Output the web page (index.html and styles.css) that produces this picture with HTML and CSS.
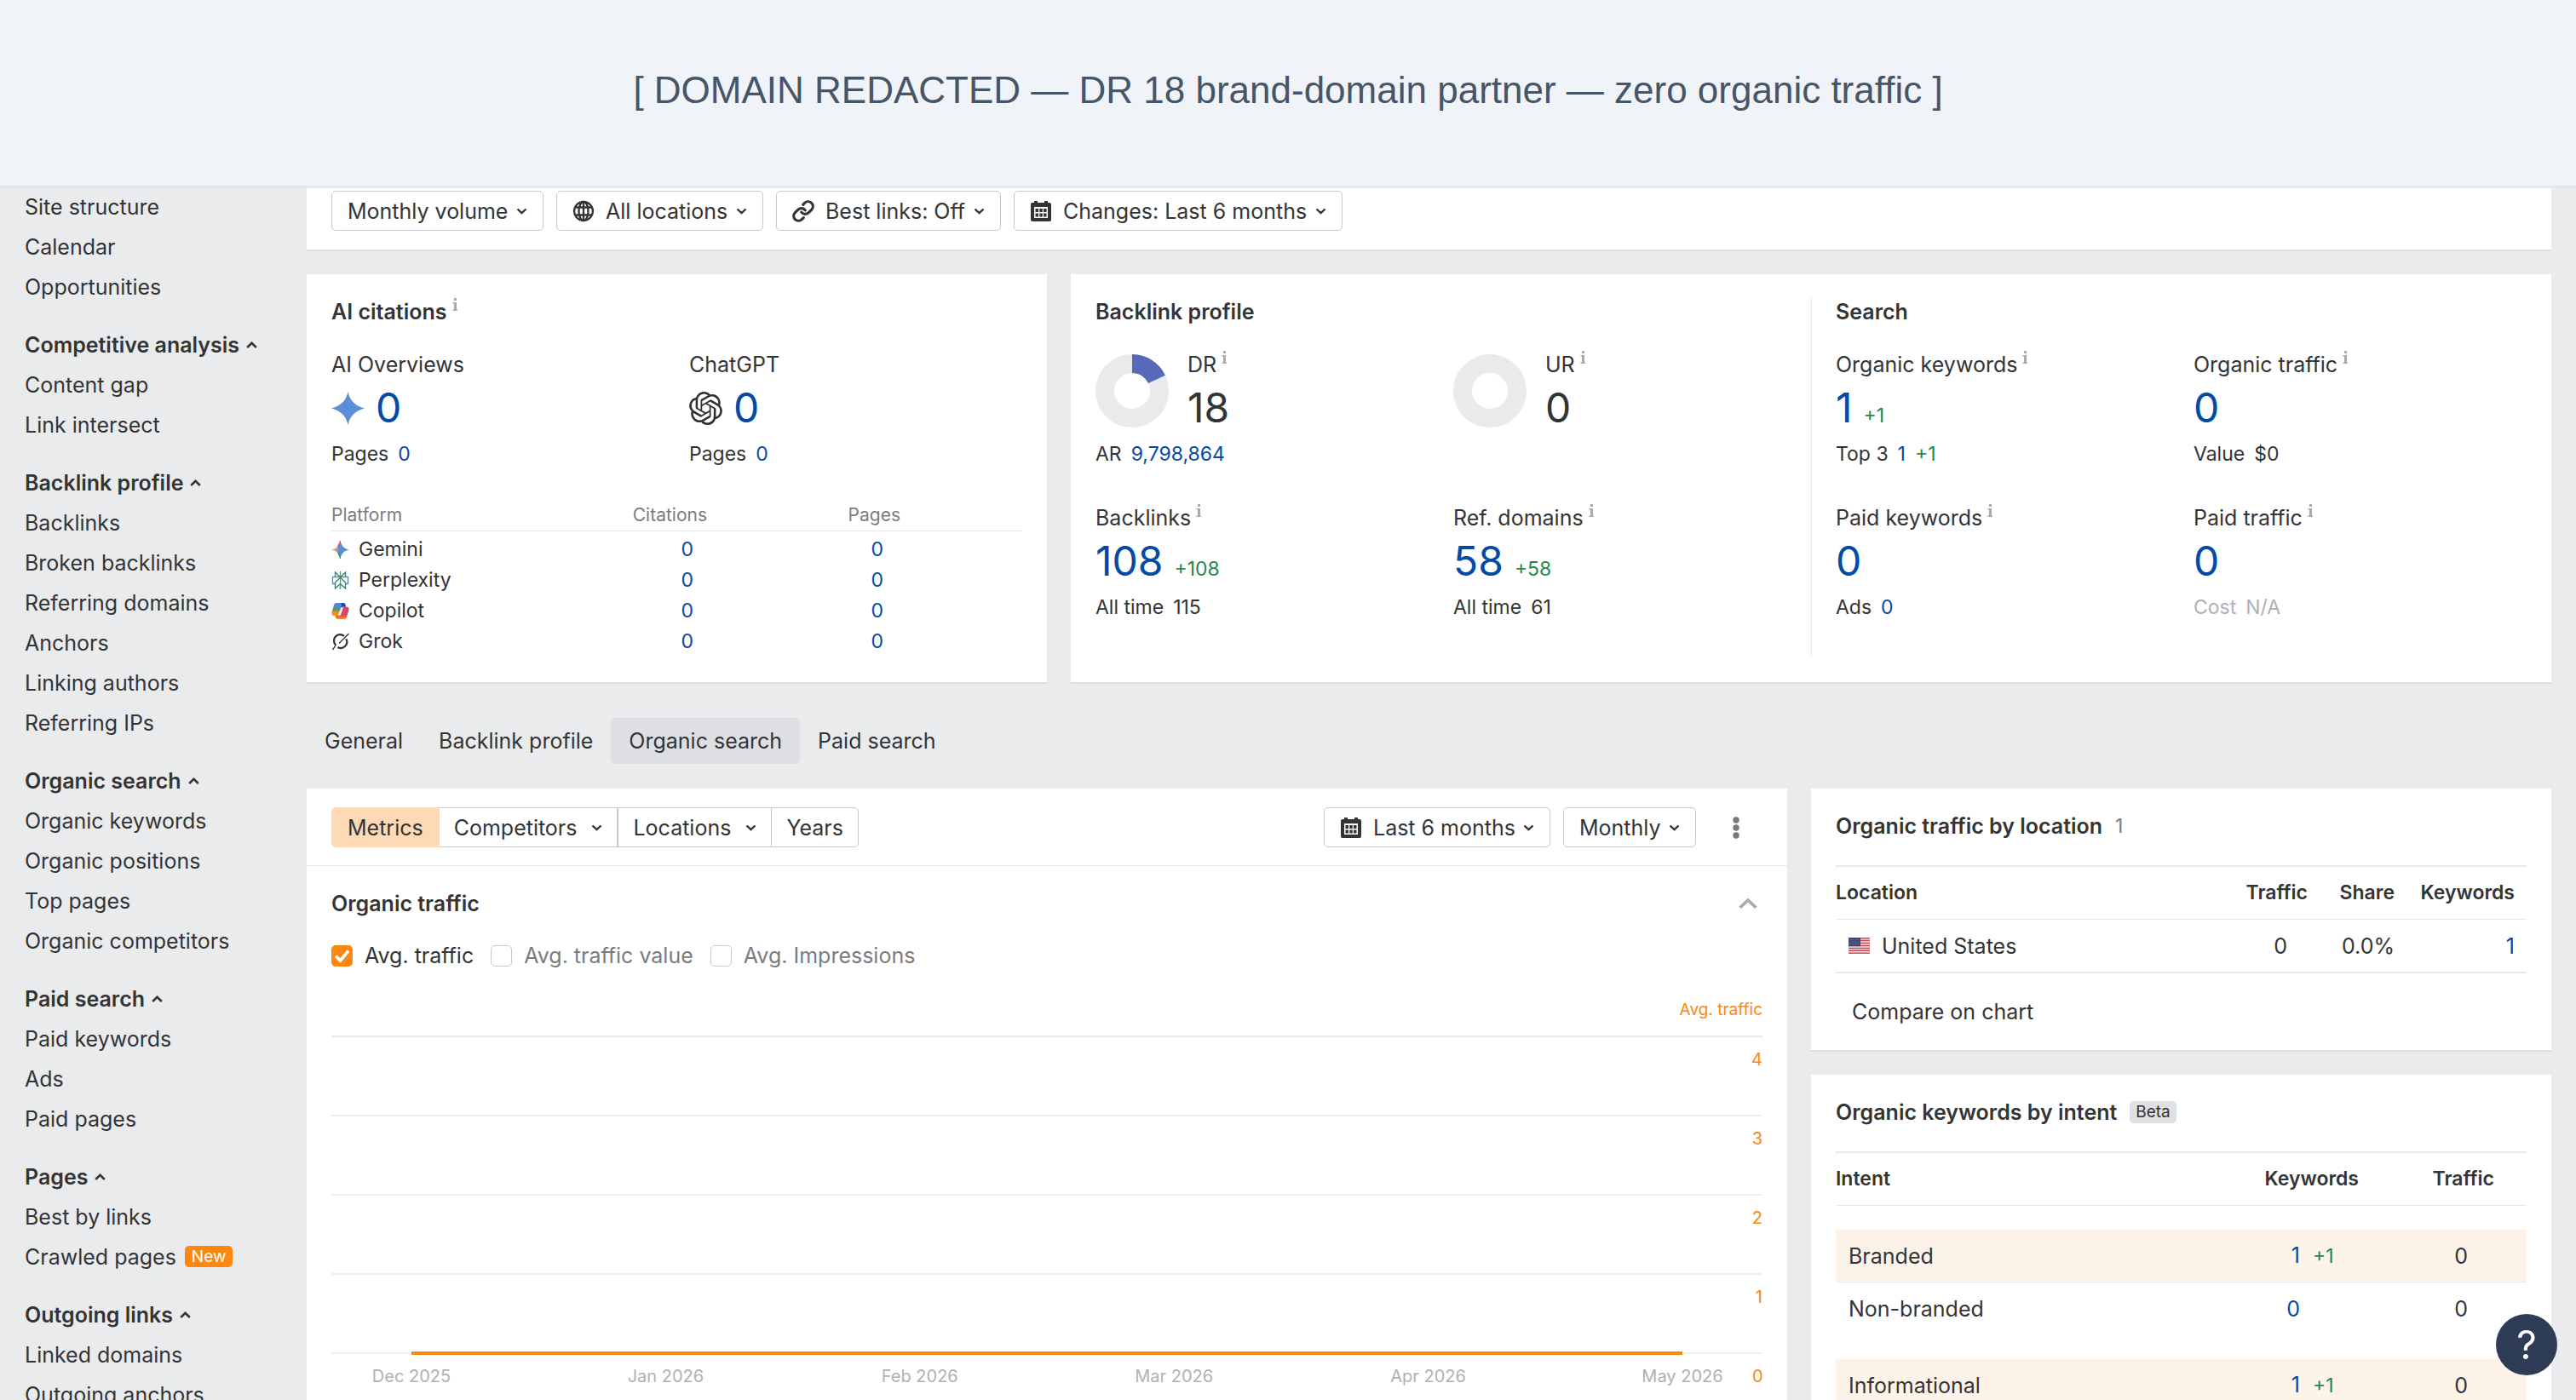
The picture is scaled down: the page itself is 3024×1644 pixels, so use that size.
FILE: index.html
```html
<!DOCTYPE html>
<html lang="en">
<head>
<meta charset="utf-8">
<title>Site Explorer – Overview</title>
<meta name="viewport" content="width=device-width, initial-scale=1">
<link rel="stylesheet" href="styles.css">
</head>
<body>
<svg class="sprite" aria-hidden="true">
  <symbol id="down" viewBox="0 0 13 8"><path d="M1.5 1.5 6.5 6.2 11.5 1.5" fill="none" stroke="currentColor" stroke-width="2.4"/></symbol>
  <symbol id="up" viewBox="0 0 13 8"><path d="M1.2 7 6.5 1.8 11.8 7" fill="none" stroke="currentColor" stroke-width="2.6"/></symbol>
  <symbol id="info" viewBox="0 0 6 15"><path d="M2 0h3v3H2zM0.500 5H5v8.500h1V15H0.500v-1.500H2V6.500H0.500z" fill="currentColor"/></symbol>
  <symbol id="calendar" viewBox="0 0 26 26"><path fill="currentColor" fill-rule="evenodd" d="M5 1h4v2h8V1h4v2h2a2 2 0 0 1 2 2v18a2 2 0 0 1-2 2H3a2 2 0 0 1-2-2V5a2 2 0 0 1 2-2h2zM5 8v13h16V8zM6.500 10H10v4H6.500zM11.300 10h3.500v4h-3.500zM16 10h3.500v4H16zM6.500 15.500H10v4H6.500zM11.300 15.500h3.500v4h-3.500zM16 15.500h3.500v4H16z"/></symbol>
</svg>

<header class="banner">[ DOMAIN REDACTED — DR 18 brand-domain partner — zero organic traffic ]</header>

<div class="shell">
  <nav class="sidebar" aria-label="Reports">
    <ul>
      <li><a href="#">Site structure</a></li>
      <li><a href="#">Calendar</a></li>
      <li><a href="#">Opportunities</a></li>
    </ul>
    <button type="button" aria-expanded="true">Competitive analysis <svg class="chev"><use href="#up"/></svg></button>
    <ul>
      <li><a href="#">Content gap</a></li>
      <li><a href="#">Link intersect</a></li>
    </ul>
    <button type="button" aria-expanded="true">Backlink profile <svg class="chev"><use href="#up"/></svg></button>
    <ul>
      <li><a href="#">Backlinks</a></li>
      <li><a href="#">Broken backlinks</a></li>
      <li><a href="#">Referring domains</a></li>
      <li><a href="#">Anchors</a></li>
      <li><a href="#">Linking authors</a></li>
      <li><a href="#">Referring IPs</a></li>
    </ul>
    <button type="button" aria-expanded="true">Organic search <svg class="chev"><use href="#up"/></svg></button>
    <ul>
      <li><a href="#">Organic keywords</a></li>
      <li><a href="#">Organic positions</a></li>
      <li><a href="#">Top pages</a></li>
      <li><a href="#">Organic competitors</a></li>
    </ul>
    <button type="button" aria-expanded="true">Paid search <svg class="chev"><use href="#up"/></svg></button>
    <ul>
      <li><a href="#">Paid keywords</a></li>
      <li><a href="#">Ads</a></li>
      <li><a href="#">Paid pages</a></li>
    </ul>
    <button type="button" aria-expanded="true">Pages <svg class="chev"><use href="#up"/></svg></button>
    <ul>
      <li><a href="#">Best by links</a></li>
      <li><a href="#">Crawled pages <span class="badge badge-new">New</span></a></li>
    </ul>
    <button type="button" aria-expanded="true">Outgoing links <svg class="chev"><use href="#up"/></svg></button>
    <ul>
      <li><a href="#">Linked domains</a></li>
      <li><a href="#">Outgoing anchors</a></li>
    </ul>
  </nav>

  <main class="main">
    <section class="card filters" aria-label="Filters">
      <label class="picker"><select aria-label="Volume"><option>Monthly volume</option></select><svg class="chev"><use href="#down"/></svg></label>
      <label class="picker">
        <svg class="icon" viewBox="0 0 26 26"><g fill="none" stroke="currentColor" stroke-width="2.300"><circle cx="13" cy="13" r="11"/><ellipse cx="13" cy="13" rx="5.500" ry="11"/><path d="M13 2v22M3.200 8.500h19.600M3.200 17.500h19.600"/></g></svg>
        <select aria-label="Location"><option>All locations</option></select><svg class="chev"><use href="#down"/></svg></label>
      <label class="picker">
        <svg class="icon" viewBox="0.500 0.500 23 23"><g fill="none" stroke="currentColor" stroke-width="2.800" stroke-linecap="round"><path d="M10 13a5 5 0 0 0 7.540.540l3-3a5 5 0 0 0-7.070-7.070l-1.720 1.710"/><path d="M14 11a5 5 0 0 0-7.540-.540l-3 3a5 5 0 0 0 7.070 7.070l1.710-1.710"/></g></svg>
        <select aria-label="Best links"><option>Best links: Off</option></select><svg class="chev"><use href="#down"/></svg></label>
      <label class="picker">
        <svg class="icon"><use href="#calendar"/></svg>
        <select aria-label="Changes"><option>Changes: Last 6 months</option></select><svg class="chev"><use href="#down"/></svg></label>
    </section>

    <div class="summary">
      <section class="card panel">
        <h2>AI citations <svg class="info"><use href="#info"/></svg></h2>
        <div class="metrics">
          <div class="metric">
            <h3>AI Overviews</h3>
            <p class="value"><svg class="logo" viewBox="0 0 39 39"><path d="M19.500 0C21.500 10 28 17 39 19.500 28 22 21.500 29 19.500 39 17.500 29 11 22 0 19.500 11 17 17.500 10 19.500 0z" fill="#5b8ed8"/></svg><a href="#">0</a></p>
            <p class="sub">Pages <a href="#">0</a></p>
          </div>
          <div class="metric">
            <h3>ChatGPT</h3>
            <p class="value"><svg class="logo" viewBox="0 0 24 24"><path fill="#303134" d="M22.2819 9.8211a5.9847 5.9847 0 0 0-.5157-4.9108 6.0462 6.0462 0 0 0-6.5098-2.9A6.0651 6.0651 0 0 0 4.9807 4.1818a5.9847 5.9847 0 0 0-3.9977 2.9 6.0462 6.0462 0 0 0 .7427 7.0966 5.98 5.98 0 0 0 .511 4.9107 6.051 6.051 0 0 0 6.5146 2.9001A5.9847 5.9847 0 0 0 13.2599 24a6.0557 6.0557 0 0 0 5.7718-4.2058 5.9894 5.9894 0 0 0 3.9977-2.9001 6.0557 6.0557 0 0 0-.7475-7.0729zm-9.022 12.6081a4.4755 4.4755 0 0 1-2.8764-1.0408l.1419-.0804 4.7783-2.7582a.7948.7948 0 0 0 .3927-.6813v-6.7369l2.02 1.1686a.071.071 0 0 1 .038.0615v5.5826a4.504 4.504 0 0 1-4.4945 4.4849zm-9.6607-4.1254a4.4708 4.4708 0 0 1-.5346-3.0137l.142.0852 4.783 2.7582a.7712.7712 0 0 0 .7806 0l5.8428-3.3685v2.3324a.0804.0804 0 0 1-.0332.0615L9.74 19.9502a4.4992 4.4992 0 0 1-6.1408-1.6464zM2.3408 7.8956a4.485 4.485 0 0 1 2.3655-1.9728V11.6a.7664.7664 0 0 0 .3879.6765l5.8144 3.3543-2.0201 1.1685a.0757.0757 0 0 1-.071 0l-4.8303-2.7865A4.504 4.504 0 0 1 2.3408 7.872zm16.5963 3.8558L13.1038 8.364 15.1192 7.2a.0757.0757 0 0 1 .071 0l4.8303 2.7913a4.4944 4.4944 0 0 1-.6765 8.1042v-5.6772a.79.79 0 0 0-.407-.667zm2.0107-3.0231l-.142-.0852-4.7735-2.7818a.7759.7759 0 0 0-.7854 0L9.409 9.2297V6.8974a.0662.0662 0 0 1 .0284-.0615l4.8303-2.7866a4.4992 4.4992 0 0 1 6.6802 4.66zM8.3065 12.863l-2.02-1.1638a.0804.0804 0 0 1-.038-.0567V6.0742a4.4992 4.4992 0 0 1 7.3757-3.4537l-.142.0805L8.704 5.459a.7948.7948 0 0 0-.3927.6813zm1.0976-2.3654l2.602-1.4998 2.6069 1.4998v2.9994l-2.5974 1.4997-2.6067-1.4997Z"/></svg><a href="#">0</a></p>
            <p class="sub">Pages <a href="#">0</a></p>
          </div>
        </div>
        <table class="platforms">
          <thead><tr><th scope="col">Platform</th><th scope="col">Citations</th><th scope="col">Pages</th><th class="rest"></th></tr></thead>
          <tbody>
            <tr><th scope="row"><span class="with-icon"><svg class="mark" viewBox="0 0 21 21"><defs><linearGradient id="gem" x1="0" x2="1"><stop offset="0" stop-color="#f59a2c"/><stop offset=".3" stop-color="#c79a94"/><stop offset=".42" stop-color="#5b8ed8"/></linearGradient></defs><path d="M10.500 0C11.500 5.500 15 9.500 21 10.500 15 11.500 11.500 15.500 10.500 21 9.500 15.500 6 11.500 0 10.500 6 9.500 9.500 5.500 10.500 0z" fill="url(#gem)"/><path d="M10.500 0c-.6 3-1.600 5-3 6.800" stroke="#cf4b5f" stroke-width="1.200" fill="none"/><path d="M10.500 21c-.6-3-1.600-5-3-6.800" stroke="#2e9160" stroke-width="1.200" fill="none"/></svg>Gemini</span></th><td><a href="#">0</a></td><td><a href="#">0</a></td><td></td></tr>
            <tr><th scope="row"><span class="with-icon"><svg class="mark" viewBox="0 0 21 21"><g fill="none" stroke-width="1.400"><path stroke="#5c8fb4" d="M10.500 0v21M4.500 14.500h-3v-8h18v8h-3"/><path stroke="#2f8f68" d="M10.500 7 4.500 1v5.500M10.500 7l6-6v5.500M10.500 7l-6 6v7l6-5.500M10.500 7l6 6v7l-6-5.500"/></g></svg>Perplexity</span></th><td><a href="#">0</a></td><td><a href="#">0</a></td><td></td></tr>
            <tr><th scope="row"><span class="with-icon"><svg class="mark" viewBox="0 0 21 21"><defs><linearGradient id="cpl" x1="0" x2="0" y1="0" y2="1"><stop offset=".2" stop-color="#5189dc"/><stop offset=".5" stop-color="#4a9a78"/><stop offset=".75" stop-color="#fb8c1e"/></linearGradient><linearGradient id="cpr" x1="0" x2="0" y1="0" y2="1"><stop offset=".3" stop-color="#d0466a"/><stop offset=".65" stop-color="#d84a52"/><stop offset="1" stop-color="#fb8c1e"/></linearGradient></defs><path d="M6 1h8c1.500 0 2 .8 2.400 2l.6 2.500h-3.500c-1.500 0-2.200.7-2.600 2L8.500 14c-.4 1.400-1 2-2.500 2H3.500C.8 16 0 14.200.6 11.500L3 3.500C3.500 1.800 4.300 1 6 1z" fill="url(#cpl)"/><path d="M12 1h2c1.500 0 2 .8 2.400 2l.6 2.500h-3.500c-1 0-1.700.3-2.100 1z" fill="#1648b0"/><path d="M15 20H7.500c-1.500 0-2-.8-2.400-2l-.6-2H7c1.500 0 2.200-.7 2.600-2L12 7.500c.4-1.400 1-2 2.500-2h3c2.700 0 3.500 1.800 2.900 4.500L18 17.500C17.500 19.200 16.700 20 15 20z" fill="url(#cpr)"/><path d="M12.500 6.500h1.300l-3 9H8.600z" fill="#fff"/></svg>Copilot</span></th><td><a href="#">0</a></td><td><a href="#">0</a></td><td></td></tr>
            <tr><th scope="row"><span class="with-icon"><svg class="mark" viewBox="0 0 21 21"><g fill="none" stroke="#303134"><path stroke-width="2.200" d="M15 4A7.200 7.200 0 0 0 5.400 14.800M7.500 17A7.200 7.200 0 0 0 17.300 7.200"/><path stroke-width="1.300" d="M9 12.500 20.500 1M5 14.500C4 16.500 2.500 18.500 1.500 20"/></g></svg>Grok</span></th><td><a href="#">0</a></td><td><a href="#">0</a></td><td></td></tr>
          </tbody>
        </table>
      </section>

      <div class="card pair">
        <section class="panel">
          <h2>Backlink profile</h2>
          <div class="metrics">
            <div class="metric gauge">
              <svg class="donut" viewBox="0 0 86 86"><circle cx="43" cy="43" r="32" fill="none" stroke="#e9eaec" stroke-width="22"/><circle cx="43" cy="43" r="32" fill="none" stroke="#5969b9" stroke-width="22" pathLength="100" stroke-dasharray="18 82" transform="rotate(-90 43 43)"/></svg>
              <h3>DR <svg class="info"><use href="#info"/></svg></h3>
              <p class="value">18</p>
              <p class="sub">AR <a href="#">9,798,864</a></p>
            </div>
            <div class="metric gauge">
              <svg class="donut" viewBox="0 0 86 86"><circle cx="43" cy="43" r="32" fill="none" stroke="#e9eaec" stroke-width="22"/></svg>
              <h3>UR <svg class="info"><use href="#info"/></svg></h3>
              <p class="value">0</p>
            </div>
            <div class="metric">
              <h3>Backlinks <svg class="info"><use href="#info"/></svg></h3>
              <p class="value"><a href="#">108</a><span class="delta">+108</span></p>
              <p class="sub">All time <span>115</span></p>
            </div>
            <div class="metric">
              <h3>Ref. domains <svg class="info"><use href="#info"/></svg></h3>
              <p class="value"><a href="#">58</a><span class="delta">+58</span></p>
              <p class="sub">All time <span>61</span></p>
            </div>
          </div>
        </section>
        <section class="panel split">
          <h2>Search</h2>
          <div class="metrics">
            <div class="metric">
              <h3>Organic keywords <svg class="info"><use href="#info"/></svg></h3>
              <p class="value"><a href="#">1</a><span class="delta">+1</span></p>
              <p class="sub">Top 3 <a href="#">1</a> <span class="delta">+1</span></p>
            </div>
            <div class="metric">
              <h3>Organic traffic <svg class="info"><use href="#info"/></svg></h3>
              <p class="value"><a href="#">0</a></p>
              <p class="sub">Value <span>$0</span></p>
            </div>
            <div class="metric">
              <h3>Paid keywords <svg class="info"><use href="#info"/></svg></h3>
              <p class="value"><a href="#">0</a></p>
              <p class="sub">Ads <a href="#">0</a></p>
            </div>
            <div class="metric">
              <h3>Paid traffic <svg class="info"><use href="#info"/></svg></h3>
              <p class="value"><a href="#">0</a></p>
              <p class="sub muted">Cost <span>N/A</span></p>
            </div>
          </div>
        </section>
      </div>
    </div>

    <nav class="tabs" aria-label="Overview sections">
      <a href="#">General</a>
      <a href="#">Backlink profile</a>
      <a href="#" class="active" aria-current="page">Organic search</a>
      <a href="#">Paid search</a>
    </nav>

    <div class="details">
      <section class="card chart-card">
        <div class="toolbar">
          <div class="segments">
            <button type="button" class="on">Metrics</button>
            <button type="button" aria-haspopup="menu">Competitors <svg class="chev"><use href="#down"/></svg></button>
            <button type="button" aria-haspopup="menu">Locations <svg class="chev"><use href="#down"/></svg></button>
            <button type="button">Years</button>
          </div>
          <div class="range">
            <label class="picker"><svg class="icon"><use href="#calendar"/></svg><select aria-label="Period"><option>Last 6 months</option></select><svg class="chev"><use href="#down"/></svg></label>
            <label class="picker"><select aria-label="Interval"><option>Monthly</option></select><svg class="chev"><use href="#down"/></svg></label>
            <button type="button" class="kebab" aria-label="More"><svg viewBox="0 0 8 26"><circle cx="4" cy="4" r="3.700"/><circle cx="4" cy="13" r="3.700"/><circle cx="4" cy="22" r="3.700"/></svg></button>
          </div>
        </div>
        <div class="chart-body">
          <div class="chart-head">
            <h2>Organic traffic</h2>
            <button type="button" class="collapse" aria-label="Collapse"><svg viewBox="0 0 22 14"><path d="M1.500 12 11 3l9.500 9" fill="none" stroke="currentColor" stroke-width="3.600"/></svg></button>
          </div>
          <div class="series">
            <label><input type="checkbox" checked>Avg. traffic</label>
            <label><input type="checkbox">Avg. traffic value</label>
            <label><input type="checkbox">Avg. Impressions</label>
          </div>
          <div class="chart">
            <p class="axis-title">Avg. traffic</p>
            <div class="row">4</div>
            <div class="row">3</div>
            <div class="row">2</div>
            <div class="row">1</div>
            <div class="row base">
              <span class="line"></span>
              <div class="months"><span>Dec 2025</span><span>Jan 2026</span><span>Feb 2026</span><span>Mar 2026</span><span>Apr 2026</span><span>May 2026</span></div>
              <span class="zero">0</span>
            </div>
          </div>
        </div>
      </section>

      <div class="side">
        <section class="card panel list-card">
          <h2>Organic traffic by location <span class="count">1</span></h2>
          <table class="list locations">
            <thead><tr><th scope="col">Location</th><th scope="col">Traffic</th><th scope="col">Share</th><th scope="col">Keywords</th></tr></thead>
            <tbody><tr><td><span class="with-icon"><svg class="flag" viewBox="0 0 25 19"><path fill="#f3e3df" d="M0 0h25v19H0z"/><path stroke="#c9485a" stroke-width="1.500" d="M0 .7h25M0 3.600h25M0 6.500h25M0 9.500h25M0 12.400h25M0 15.300h25M0 18.200h25"/><path fill="#3a4673" d="M0 0h14v10.200H0z"/><path stroke="#8d95b5" stroke-width="1" stroke-dasharray="1 2" d="M1.500 2.500h12M1.500 5h12M1.500 7.500h12"/></svg>United States</span></td><td>0</td><td>0.0%</td><td><a href="#">1</a></td></tr></tbody>
          </table>
          <button type="button" class="compare">Compare on chart</button>
        </section>
        <section class="card panel list-card">
          <h2>Organic keywords by intent <span class="badge badge-beta">Beta</span></h2>
          <table class="list intents">
            <thead><tr><th scope="col">Intent</th><th scope="col">Keywords</th><th scope="col">Traffic</th></tr></thead>
            <tbody>
              <tr class="hot"><td>Branded</td><td><a href="#">1</a><span class="delta">+1</span></td><td>0</td></tr>
              <tr><td>Non-branded</td><td><a href="#">0</a><span class="delta"></span></td><td>0</td></tr>
            </tbody>
            <tbody>
              <tr class="hot"><td>Informational</td><td><a href="#">1</a><span class="delta">+1</span></td><td>0</td></tr>
            </tbody>
          </table>
        </section>
      </div>
    </div>
  </main>
</div>
<button type="button" class="help" aria-label="Help">?</button>
</body>
</html>
```

FILE: styles.css
```css
:root {
  --text: #333436;
  --grey: #7b7c7f;
  --pale: #b0b1b4;
  --blue: #054aa4;
  --green: #1f8a4c;
  --orange: #fd870f;
  --line: #e8e9eb;
  --border: #c9cacc;
  --bg: #eaebed;
}

* { box-sizing: border-box; }

body {
  margin: 0;
  height: 100vh;
  overflow: hidden;
  display: flex;
  flex-direction: column;
  background: var(--bg);
  color: var(--text);
  font: 25px/36px Inter, "Liberation Sans", sans-serif;
}

.sprite { display: none; }
h2, h3, p, ul { margin: 0; padding: 0; font-size: inherit; font-weight: 400; }
ul { list-style: none; }
a { color: inherit; text-decoration: none; }
button, select, input { font: inherit; color: inherit; margin: 0; }
button { background: none; border: 0; padding: 0; cursor: pointer; }
svg { flex: none; }

.chev { width: 13px; height: 8px; }
.icon { width: 26px; height: 26px; }
.info { width: 6px; height: 15px; margin-top: 2px; color: #a9aaad; align-self: flex-start; }

.banner {
  flex: none;
  height: 221px;
  border-bottom: 3px solid #e2e8f0;
  padding-bottom: 6px;
  display: flex;
  align-items: center;
  justify-content: center;
  background: #f0f4f9;
  color: #475569;
  font: 44px/52px "Liberation Sans", Arial, sans-serif;
}

.shell {
  flex: 1;
  min-height: 0;
  overflow: hidden;
  display: flex;
}

/* Sidebar */
.sidebar { flex: none; width: 360px; margin-top: -2px; padding-left: 29px; }
.sidebar a, .sidebar button { display: flex; align-items: center; height: 47px; }
.sidebar a { gap: 10px; }
.sidebar button { margin-top: 21px; gap: 8px; font-weight: 600; }

.badge { border-radius: 5px; font-size: 19px; font-weight: 400; }
.badge-new { padding: 0 8px; line-height: 25px; background: var(--orange); color: #fff; }
.badge-beta { padding: 0 7px; line-height: 26px; background: #dfe0e4; }

/* Cards */
.main { flex: 1; min-width: 0; padding-right: 29px; }
.card { background: #fff; box-shadow: 0 2px 0 #dfe0e2; }
.panel { padding: 26px 29px 30px; }
.panel h2, .chart-head h2 { display: flex; align-items: center; gap: 7px; font-weight: 600; }

.filters { display: flex; gap: 15px; padding: 3px 29px 22px; }
.picker {
  display: flex;
  align-items: center;
  height: 47px;
  padding: 0 18px;
  border: 1px solid var(--border);
  border-radius: 5px;
}
.picker .icon { margin-right: 13px; }
.picker .chev { margin-left: 9px; }
.picker select { appearance: none; border: 0; padding: 0; background: none; outline: 0; }

.summary { display: grid; grid-template-columns: minmax(0, 1fr) minmax(0, 2fr); gap: 28px; margin-top: 29px; }
.pair { display: grid; grid-template-columns: 1fr 1fr; }
.split {
  background: linear-gradient(var(--line), var(--line)) left 28px / 1px calc(100% - 58px) no-repeat;
}

.metrics { display: grid; grid-template-columns: 1fr 1fr; gap: 39px 29px; margin-top: 26px; }
.metric h3 { display: flex; align-items: center; gap: 6px; }
.value { display: flex; align-items: baseline; gap: 13px; margin-top: 4px; font-size: 48px; line-height: 58px; }
.value .logo { width: 39px; height: 39px; align-self: center; }
.value a, .sub a, td a { color: var(--blue); }
.delta { color: var(--green); font-size: 23px; line-height: 36px; }
.sub { display: flex; align-items: baseline; gap: 11px; margin-top: 7px; font-size: 23px; }
.muted { color: var(--pale); }
.gauge { display: grid; grid-template-columns: 86px 1fr; column-gap: 22px; align-content: start; }
.donut { width: 86px; height: 86px; margin-top: 6px; grid-row: 1 / 3; }
.gauge .sub { grid-column: 1 / 3; }

table { width: 100%; border-collapse: separate; border-spacing: 0; table-layout: fixed; }
th, td { padding: 0; text-align: right; font-weight: 400; }
th:first-child, td:first-child { text-align: left; }
.with-icon { display: flex; align-items: center; }

.platforms { margin-top: 35px; font-size: 23px; }
.platforms thead th { height: 38px; border-bottom: 1px solid var(--line); color: var(--grey); font-size: 21px; }
.platforms th:nth-child(1) { width: 300px; }
.platforms th:nth-child(2) { width: 141px; }
.platforms th:nth-child(3) { width: 227px; }
.platforms tbody::before { content: ""; display: block; height: 3px; }
.platforms tbody tr > * { height: 36px; }
.platforms td { padding-right: 16px; }
.platforms td:nth-child(3) { padding-right: 20px; }
.mark { width: 21px; height: 21px; margin-right: 11px; }

/* Tabs */
.tabs { display: flex; margin: 42px 0 29px; }
.tabs a { padding: 9px 21px; border-radius: 6px; }
.tabs .active { background: #dedfe3; }

.details { display: grid; grid-template-columns: minmax(0, 2fr) minmax(0, 1fr); gap: 28px; }

/* Chart */
.toolbar {
  display: flex;
  justify-content: space-between;
  padding: 22px 29px 21px;
  border-bottom: 1px solid var(--line);
}
.segments, .range { display: flex; }
.segments button {
  display: flex;
  align-items: center;
  gap: 17px;
  height: 47px;
  padding: 0 17px;
  border: 1px solid var(--border);
  border-left-width: 0;
}
.segments button:first-child { padding: 0 18px; border-left-width: 1px; border-radius: 5px 0 0 5px; }
.segments button:nth-child(2) { border-right-width: 2px; }
.segments button:last-child { border-radius: 0 5px 5px 0; }
.segments .on { background: #fed9b5; border-color: #fed9b5; }
.range { gap: 15px; }
.kebab { width: 63px; }
.kebab svg { display: block; width: 8px; height: 26px; margin: auto; fill: #77787b; }

.chart-body { padding: 26px 29px; }
.chart-head { display: flex; justify-content: space-between; }
.collapse { padding: 0 6px; color: #aaabae; }
.collapse svg { display: block; width: 22px; height: 14px; }
.series { display: flex; gap: 20px; margin: 25px 0 34px; }
.series label { display: flex; align-items: center; gap: 14px; color: var(--grey); }
.series label:first-child { color: var(--text); }
.series input {
  appearance: none;
  width: 25px;
  height: 25px;
  border: 1px solid var(--border);
  border-radius: 5px;
}
.series input:checked {
  border: 0;
  background: var(--orange) url("data:image/svg+xml,%3Csvg xmlns='http://www.w3.org/2000/svg' viewBox='0 0 25 25'%3E%3Cpath d='M5 12.500l5.500 5.500L20 6.500' fill='none' stroke='white' stroke-width='3.600'/%3E%3C/svg%3E");
}

.chart { color: var(--orange); font-size: 20px; line-height: 24px; text-align: right; }
.axis-title { margin-bottom: 18px; font-size: 19px; }
.row { height: 93px; padding-top: 14px; border-top: 2px solid var(--line); }
.row + .row { border-color: #eeeff0; }
.base { position: relative; display: flex; }
.line { position: absolute; left: 94px; right: 94px; top: -3px; height: 4px; background: var(--orange); }
.months { flex: 1; display: flex; justify-content: space-between; padding: 0 82px 0 94px; color: var(--pale); }
.months span { width: 0; display: flex; justify-content: center; white-space: nowrap; }
.zero { flex: none; width: 12px; }

/* Lists */
.side { display: grid; gap: 29px; align-content: start; }
.list-card { padding-bottom: 22px; }
.list-card h2 { gap: 15px; }
.count { color: var(--grey); font-size: 23px; font-weight: 400; }
.list { margin-top: 28px; border-top: 2px solid var(--line); }
.list th { height: 62px; padding-bottom: 2px; border-bottom: 1px solid var(--line); font-size: 23px; font-weight: 600; }
.list td { height: 62px; }
.list td:first-child { padding-left: 15px; }
.flag { width: 25px; height: 19px; margin-right: 14px; }
.locations td { height: 63px; border-bottom: 2px solid var(--line); }
.locations th:nth-child(n+2), .locations td:nth-child(n+2) { padding-right: 14px; }
.locations th:nth-child(2) { width: 130px; }
.locations th:nth-child(3) { width: 102px; }
.locations th:nth-child(4) { width: 141px; }
.locations td:nth-child(2) { padding-right: 38px; }
.compare { display: block; height: 47px; margin-top: 21px; padding: 0 19px; }
.intents tbody::before { content: ""; display: block; height: 28px; }
.intents th:nth-child(2) { width: 140px; }
.intents th:nth-child(3) { width: 197px; padding-right: 38px; }
.intents td:nth-child(3) { padding-right: 69px; }
.intents .delta { display: inline-block; width: 54px; margin-left: 15px; text-align: left; }
.hot td { background: #fef3e9; border-bottom: 1px solid var(--line); }

.help {
  position: fixed;
  right: 22px;
  bottom: 29px;
  width: 72px;
  height: 72px;
  border-radius: 50%;
  background: #2f3c56;
  color: #fff;
  font-size: 46px;
}
```
